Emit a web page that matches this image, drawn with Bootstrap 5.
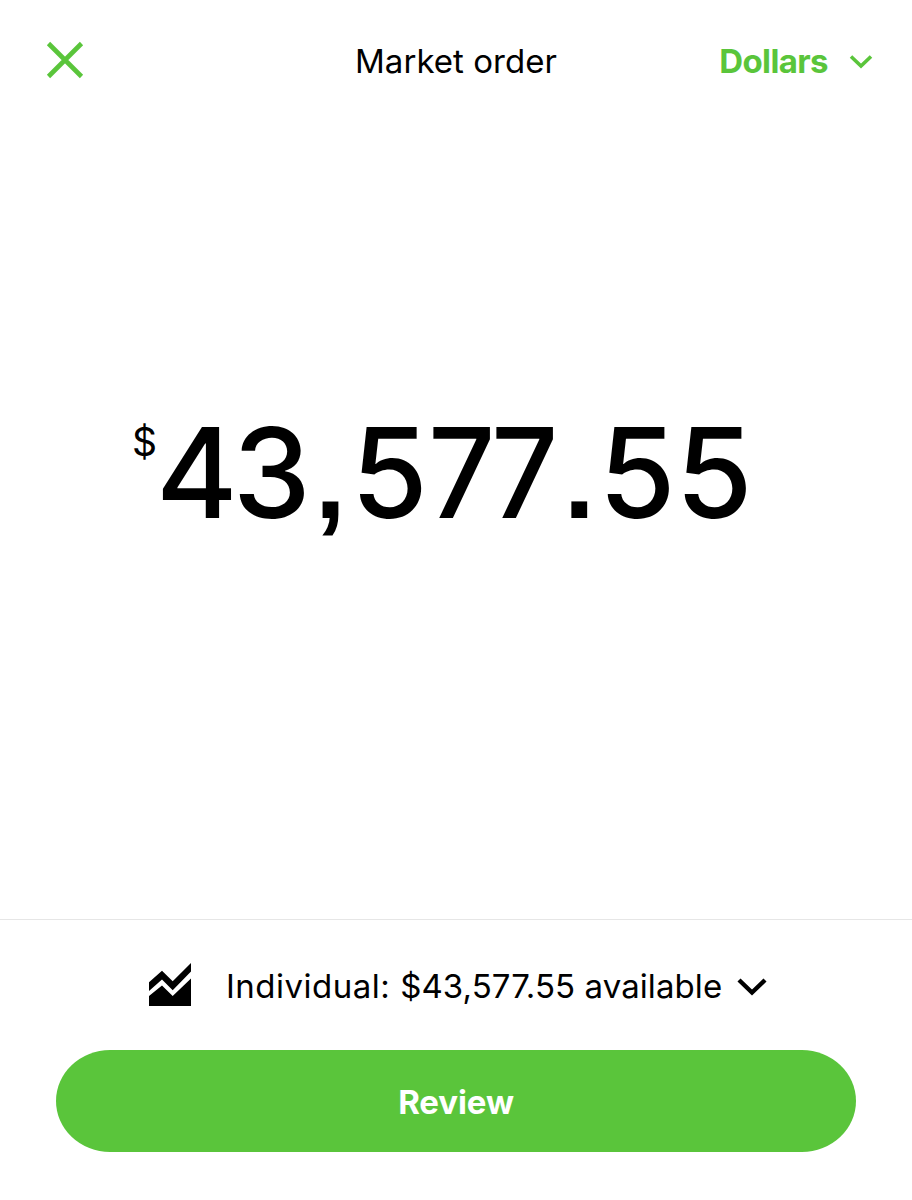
<!DOCTYPE html>
<html lang="en">
<head>
<meta charset="utf-8">
<meta name="viewport" content="width=device-width, initial-scale=1">
<title>Market order</title>
<link href="https://cdn.jsdelivr.net/npm/bootstrap@5.3.0/dist/css/bootstrap.min.css" rel="stylesheet">
<style>
  :root { --brand: #5ac53b; }
  body { font-family: Inter, "Liberation Sans", sans-serif; font-size: 33px; color: #000; background: #fff; line-height: 40px; }
  .brand-text { color: var(--brand); }
  .order-bar { height: 122px; padding: 0 39px 0 46px; }
  .order-bar .side { flex: 1 1 0; }
  .order-title { font-size: 33px; line-height: 40px; letter-spacing: .05px; font-weight: 400; margin: 0 3.5px 0 -3.5px; }
  .close-btn { margin-top: -3px; }
  .unit-btn { font-weight: 700; font-size: 33px; letter-spacing: -.6px; gap: 21px; line-height: 40px; }
  .amount-area { height: 797px; padding: 276px 0 0 132px; }
  .amount-sign { font-size: 39px; line-height: 40px; width: 24px; padding-top: 24px; }
  .amount { font-size: 124.5px; line-height: 150px; font-weight: 500; font-kerning: none; }
  .amount .pt { font-family: "Liberation Sans", sans-serif; font-weight: 700; font-size: 112px; line-height: 1; }
  .k4 { letter-spacing: -5px; }
  .k3 { letter-spacing: 4px; }
  .k-comma { letter-spacing: 5px; }
  .k5 { letter-spacing: -1.5px; }
  .k7 { display: inline-block; line-height: 1; transform: scaleX(.94); }
  .k7-first { margin-right: -8.5px; }
  .k7-last { margin-right: 3.5px; }
  .k-point { letter-spacing: 4px; }
  .order-foot { border-top: 1px solid #e6e6e6; height: 281px; padding: 43px 56px 0; }
  .account-row { height: 44px; margin-left: 93px; }
  .account-text { margin-left: 35px; width: 511px; padding-top: 2px; letter-spacing: .08px; }
  .account-name { letter-spacing: .5px; }
  .btn-review { --bs-btn-color:#fff; --bs-btn-bg: var(--brand); --bs-btn-hover-bg:#51b235; --bs-btn-hover-color:#fff; --bs-btn-border-width: 0; height: 102px; margin-top: 43px; padding-top: 9px; font-size: 33px; font-weight: 700; letter-spacing: -.1px; border-radius: 54px / 51px; }
</style>
</head>
<body class="overflow-hidden">
<header class="order-bar d-flex align-items-center">
  <div class="side">
    <button class="btn p-0 border-0 d-block close-btn" aria-label="Close">
      <svg class="d-block" width="38" height="38" viewBox="0 0 38 38" fill="none" stroke="#5ac53b" stroke-width="4.6"><path d="M2.5 2.5 35.5 35.5M35.5 2.5 2.5 35.5"/></svg>
    </button>
  </div>
  <h1 class="order-title">Market order</h1>
  <div class="side d-flex justify-content-end">
    <button class="btn p-0 border-0 unit-btn brand-text d-flex align-items-center"><span>Dollars</span>
      <svg width="24" height="16" viewBox="0 0 24 16" fill="none" stroke="currentColor" stroke-width="3.6"><path d="M2 3.500 12 13 22 3.500"/></svg>
    </button>
  </div>
</header>
<main class="amount-area d-flex align-items-start text-nowrap">
  <span class="amount-sign">$</span><span class="amount"><span class="k4">4</span><span class="k3">3</span><span class="pt k-comma">,</span><span class="k5">5</span><span class="k7 k7-first">7</span><span class="k7 k7-last">7</span><span class="pt k-point">.</span>55</span>
</main>
<footer class="order-foot">
  <div class="account-row d-flex align-items-center text-nowrap">
    <svg width="42" height="44" viewBox="0 0 42 44"><path d="M0 19.300 13 7.700 23.700 18.300 42 0V8.500L23.700 27.200 13 16.500 0 28ZM0 33 13 22.500 23.700 33 42 15.500V43H0Z"/></svg>
    <span class="account-text"><span class="account-name">Individual: </span>$43,577.55 available</span>
    <svg class="mt-1" width="30" height="20" viewBox="0 0 30 20" fill="none" stroke="#000" stroke-width="4.4"><path d="M2 3 15 15.500 28 3"/></svg>
  </div>
  <button class="btn btn-review w-100 d-block">Review</button>
</footer>
<script src="https://cdn.jsdelivr.net/npm/bootstrap@5.3.0/dist/js/bootstrap.bundle.min.js"></script>
</body>
</html>
